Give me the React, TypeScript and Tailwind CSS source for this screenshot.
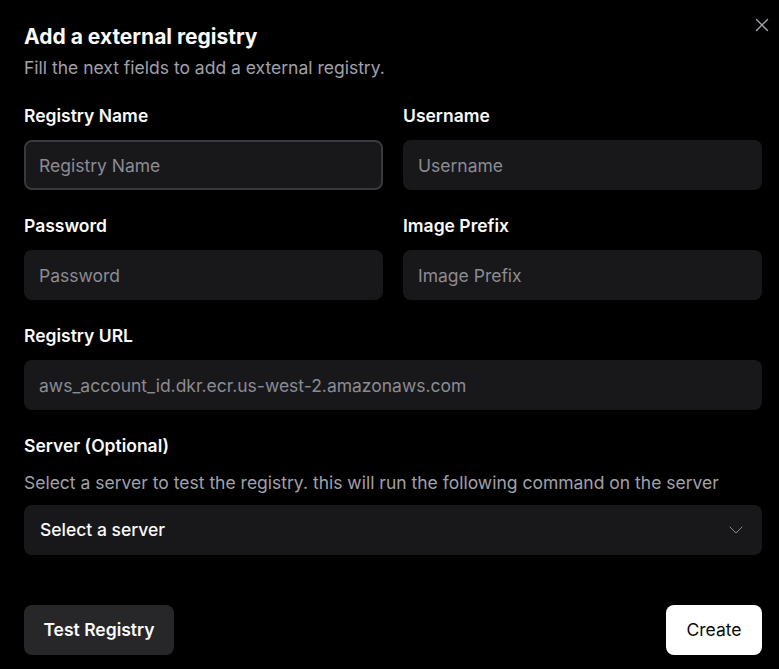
import { X, ChevronDown } from "lucide-react";

function Field({
  label,
  placeholder,
  focused,
}: {
  label: string;
  placeholder: string;
  focused?: boolean;
}) {
  return (
    <div className="flex flex-col gap-3">
      <label className="text-[17.5px] font-semibold leading-6 text-[#fafafa]">{label}</label>
      <input
        placeholder={placeholder}
        autoFocus={focused}
        className={
          focused
            ? "h-[50px] w-full rounded-lg border-2 border-[#38383d] bg-[#18181b] px-[13px] text-[17.5px] text-white placeholder:text-[#8b8b93] outline-none"
            : "h-[50px] w-full rounded-lg border-2 border-transparent bg-[#18181b] px-[13px] text-[17.5px] text-white placeholder:text-[#8b8b93] outline-none"
        }
      />
    </div>
  );
}

export default function App() {
  return (
    <main
      className="relative min-h-screen w-full bg-black text-white"
      style={{ fontFamily: "Inter, 'Noto Sans', sans-serif" }}
    >
      <button className="absolute right-[6px] top-[14px] text-[#a1a1aa]">
        <X size={22} strokeWidth={1.5} />
      </button>

      <div className="flex flex-col pl-6 pr-[17px] pt-[23px]">
        {/* Header */}
        <h2 className="text-[21px] font-bold leading-7 text-[#fafafa]">Add a external registry</h2>
        <p className="mt-[5px] text-[17.5px] leading-6 text-[#a1a1aa]">
          Fill the next fields to add a external registry.
        </p>

        <div className="mt-6 grid grid-cols-2 gap-x-5 gap-y-6">
          <Field label="Registry Name" placeholder="Registry Name" focused />
          <Field label="Username" placeholder="Username" />
          <Field label="Password" placeholder="Password" />
          <Field label="Image Prefix" placeholder="Image Prefix" />
        </div>

        <div className="mt-6">
          <Field label="Registry URL" placeholder="aws_account_id.dkr.ecr.us-west-2.amazonaws.com" />
        </div>

        <div className="mt-6 flex flex-col">
          <span className="text-[17.5px] font-semibold leading-6 text-[#fafafa]">Server (Optional)</span>
          <span className="mt-[13px] text-[17.5px] leading-6 text-[#a1a1aa]">
            Select a server to test the registry. this will run the following command on the server
          </span>
          <button className="mt-[10px] flex h-[50px] w-full items-center justify-between rounded-lg bg-[#18181b] pl-4 pr-[14px] text-[17.5px] font-medium text-[#fafafa]">
            Select a server
            <ChevronDown size={24} strokeWidth={1} className="text-[#8b8b93]" />
          </button>
        </div>

        <div className="mt-[50px] flex items-center justify-between">
          <button className="h-[50px] w-[150px] rounded-lg bg-[#27272a] text-[17.5px] font-semibold text-[#fafafa]">
            Test Registry
          </button>
          <button className="h-[50px] w-[96px] rounded-lg bg-white text-[17.5px] font-normal text-[#09090b]">
            Create
          </button>
        </div>
      </div>
    </main>
  );
}
